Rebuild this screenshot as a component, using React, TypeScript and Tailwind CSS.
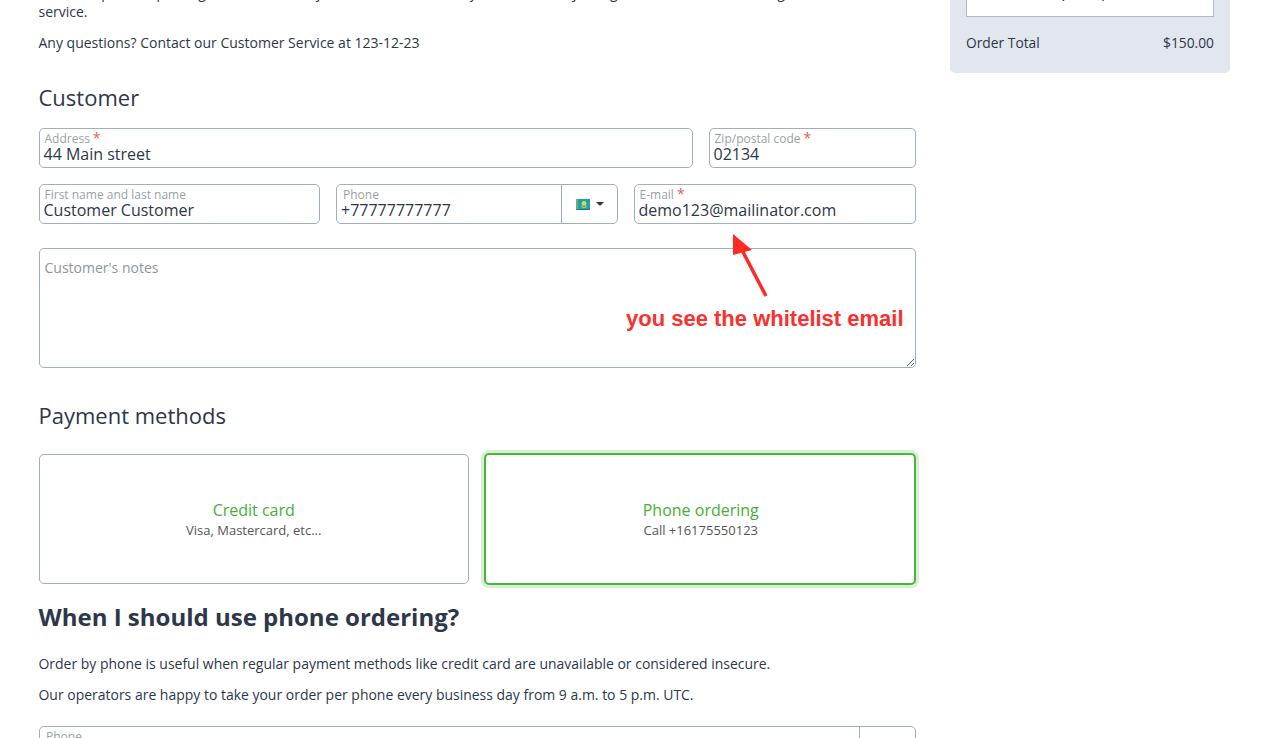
import React from "react";

const Star = () => <span className="text-[#e3605a] text-[14px] leading-none ml-[3px]">*</span>;

function Field({ label, value, required, className }: { label: string; value: string; required?: boolean; className: string }) {
  return (
    <div className={`h-10 border border-[#a0aec0] rounded-[5px] bg-white pl-[3.5px] overflow-hidden ${className}`}>
      <div className="pt-[2px] h-[17px] pl-[1px] text-[12px] leading-[15px] text-[#9a9fa6] whitespace-nowrap">
        {label}
        {required && <Star />}
      </div>
      <div className="text-[16px] leading-[16px] text-[#2d3748] whitespace-nowrap">{value}</div>
    </div>
  );
}

function Flag() {
  return (
    <svg width="14" height="11" viewBox="0 0 14 11" className="block">
      <rect width="14" height="11" fill="#1f9fb5" />
      <rect width="2" height="11" fill="#6fb06a" />
      <circle cx="8" cy="4.5" r="2.4" fill="#e9d24a" />
      <path d="M5 7.5 Q8 9.5 11 7.5" stroke="#d9cf55" strokeWidth="1" fill="none" />
      <rect y="10" width="14" height="1" fill="#15808f" />
    </svg>
  );
}

function PhoneField({ value, className }: { value: string; className: string }) {
  return (
    <div className={`h-10 border border-[#a0aec0] rounded-[5px] bg-white flex overflow-hidden ${className}`}>
      <div className="flex-1 pl-[4px]">
        <div className="pt-[2px] h-[17px] pl-[2px] text-[12px] leading-[15px] text-[#9a9fa6]">Phone</div>
        <div className="text-[16px] leading-[16px] text-[#2d3748] whitespace-nowrap">{value}</div>
      </div>
      <div className="w-[56px] border-l border-[#a0aec0] flex items-center justify-center gap-[6px]">
        <Flag />
        <span className="w-0 h-0 border-l-[4px] border-r-[4px] border-t-[4px] border-l-transparent border-r-transparent border-t-[#2d3748]" />
      </div>
    </div>
  );
}

export default function App() {
  return (
    <div
      className="relative h-[738px] overflow-hidden bg-white text-[#2d3748] text-[14px] leading-[21px]"
      style={{ fontFamily: '"Open Sans", "Noto Sans", sans-serif' }}
    >
      <div className="flex items-start pl-[39px] -mt-[20px]">
        <main className="w-[877px] shrink-0">
          <p className="-ml-[0.5px] h-[21px] leading-[25px] whitespace-nowrap">
            Once the product passing the final check by the store team is ready for the delivery using our trusted courier along with the
          </p>
          <p className="-ml-[0.5px]">service.</p>
          <p className="-ml-[0.5px] mt-[10px]">Any questions? Contact our Customer Service at 123-12-23</p>

          <h2 className="-ml-[0.5px] mt-[29px] text-[22px] leading-[30px] font-normal">Customer</h2>
          <div className="mt-[16px] flex gap-4">
            <Field label="Address" value="44 Main street" required className="w-[654px]" />
            <Field label="Zip/postal code" value="02134" required className="w-[207px]" />
          </div>
          <div className="mt-4 flex gap-4">
            <Field label="First name and last name" value="Customer Customer" className="w-[281px]" />
            <PhoneField value="+77777777777" className="w-[282px]" />
            <Field label="E-mail" value="demo123@mailinator.com" required className="w-[282px]" />
          </div>
          <textarea
            readOnly
            placeholder="Customer's notes"
            className="mt-6 block w-[877px] h-[120px] border border-[#a0aec0] rounded-[5px] px-[4.5px] py-[8px] text-[14px] leading-[21px] outline-none placeholder:text-[#8f949b]"
          />

          <h2 className="-ml-[0.5px] mt-[32px] text-[22px] leading-[30px] font-normal">Payment methods</h2>
          <div className="mt-[24px] flex gap-[15px]">
            <div className="w-[430px] h-[130px] border border-[#a0aec0] rounded-[5px] flex flex-col items-center justify-center">
              <div className="text-[16px] leading-[22px] text-[#45b035]">Credit card</div>
              <div className="text-[13px] leading-[18px] text-[#555]">Visa, Mastercard, etc...</div>
            </div>
            <div className="w-[433px] h-[132px] -my-px pl-[2px] border-2 border-[#48b53c] rounded-[5px] ring-[3px] ring-[#d9eed5] flex flex-col items-center justify-center">
              <div className="text-[16px] leading-[22px] text-[#45b035]">Phone ordering</div>
              <div className="text-[13px] leading-[18px] text-[#555]">Call +16175550123</div>
            </div>
          </div>

          <h3 className="-ml-[0.5px] mt-[16px] text-[24px] leading-[33px] font-bold">When I should use phone ordering?</h3>
          <p className="-ml-[0.5px] mt-[20px] text-[13.97px]">Order by phone is useful when regular payment methods like credit card are unavailable or considered insecure.</p>
          <p className="-ml-[0.5px] mt-[10px] text-[13.97px]">Our operators are happy to take your order per phone every business day from 9 a.m. to 5 p.m. UTC.</p>
          <div className="mt-[21px]">
            <PhoneField value="" className="w-[877px]" />
          </div>
        </main>

        <aside className="ml-[34px] w-[280px] bg-[#e2e6ee] rounded-b-[5px] px-4 pb-[20px]">
          <div className="h-[37px] bg-white border border-[#b4bac3] border-t-0 pl-[17px] pt-[1px] text-[16px] leading-[20px] whitespace-nowrap">
            Customer pickup
          </div>
          <div className="mt-[15px] flex justify-between text-[13.8px]">
            <span>Order Total</span>
            <span>$150.00</span>
          </div>
        </aside>
      </div>

      <svg className="absolute left-[725px] top-[228px]" width="50" height="72" viewBox="0 0 50 72">
        <line x1="41" y1="68" x2="18" y2="24" stroke="#fc2b25" strokeWidth="3.5" />
        <polygon points="8,6 27,22 8,27" fill="#fc2b25" />
      </svg>
      <div
        className="absolute left-[626px] top-[305px] text-[22px] leading-[28px] font-bold text-[#fc2f2f] whitespace-nowrap"
        style={{ fontFamily: '"Liberation Sans", Arial, sans-serif' }}
      >
        you see the whitelist email
      </div>
    </div>
  );
}
